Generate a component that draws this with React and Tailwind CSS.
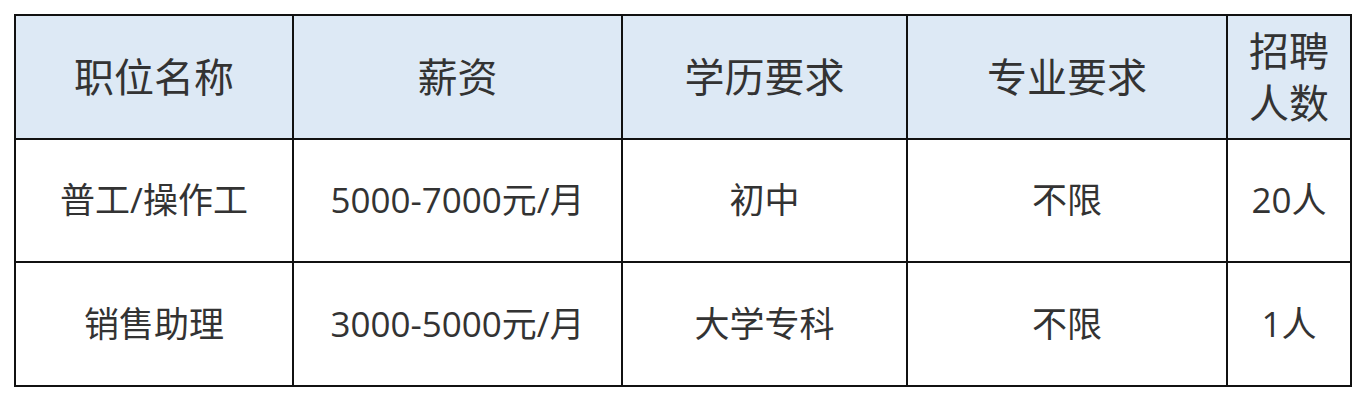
export default function App() {
  const font = { fontFamily: "'Open Sans', 'Noto Sans CJK SC', sans-serif" };
  const head = "bg-[#dde9f5] flex items-center justify-center text-center text-[40px] leading-[52px] text-[#333333]";
  const cell = "bg-white flex items-center justify-center text-center text-[35px] text-[#333333]";
  const rows = [
    ["普工/操作工", "5000-7000元/月", "初中", "不限", "20人"],
    ["销售助理", "3000-5000元/月", "大学专科", "不限", "1人"],
  ];
  return (
    <div className="w-[1366px] h-[402px] bg-white pt-[14px] pl-[14px]" style={font}>
      <div className="inline-grid grid-cols-[276px_327px_283px_318px_122px] grid-rows-[122px_121px_122px] gap-[2px] p-[2px] bg-[#111111]">
        <div className={head}>职位名称</div>
        <div className={head}>薪资</div>
        <div className={head}>学历要求</div>
        <div className={head}>专业要求</div>
        <div className={head}>招聘<br />人数</div>
        {rows.map((r, i) =>
          r.map((t, j) => (
            <div key={i + "-" + j} className={cell}>{t}</div>
          ))
        )}
      </div>
    </div>
  );
}
